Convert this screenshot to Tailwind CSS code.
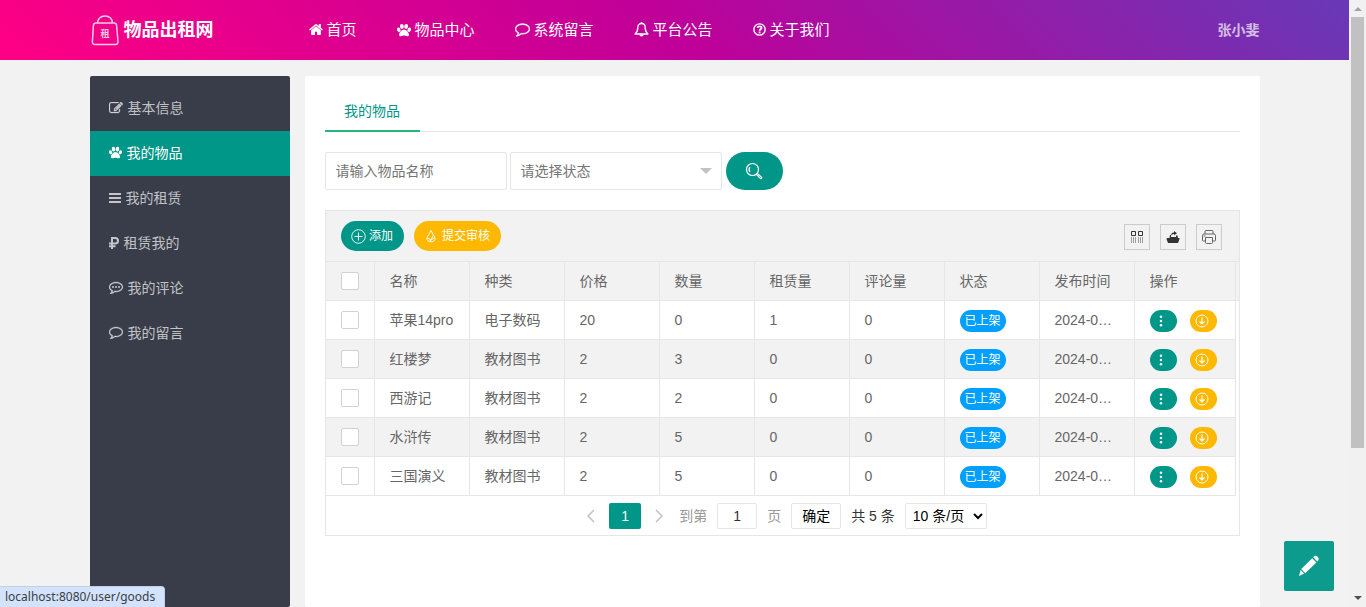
<!DOCTYPE html>
<html lang="zh">
<head>
  <meta charset="UTF-8" />
  <meta name="viewport" content="width=device-width, initial-scale=1.0"/>
  <title>物品出租网</title>
  <script src="https://cdn.jsdelivr.net/npm/@tailwindcss/browser@4"></script>
</head>
<body class="bg-[#f2f2f2] h-screen overflow-hidden flex text-sm text-[#666] font-['Liberation_Sans','Noto_Sans_CJK_SC',sans-serif]">

  <!-- Icons -->
  <svg class="hidden">
    <symbol id="i-home" viewBox="64 128 1664 1536"><path d="M1472 992v480q0 26-19 45t-45 19h-384v-384h-256v384h-384q-26 0-45-19t-19-45v-480q0-1 .5-3t.5-3l575-474 575 474q1 2 1 6zm223-69l-62 74q-8 9-21 11h-3q-13 0-21-7l-692-577-692 577q-12 8-24 7-13-2-21-11l-62-74q-8-10-7-23.500t11-21.500l719-599q32-26 76-26t76 26l244 204v-195q0-14 9-23t23-9h192q14 0 23 9t9 23v408l219 182q10 8 11 21.500t-7 23.500z"/></symbol>
    <symbol id="i-paw" viewBox="0 0 14 14"><ellipse cx="4.900" cy="3.400" rx="1.900" ry="2.500" transform="rotate(-10 4.900 3.400)"/><ellipse cx="9.100" cy="3.400" rx="1.900" ry="2.500" transform="rotate(10 9.100 3.400)"/><ellipse cx="1.700" cy="6.800" rx="1.700" ry="2.200" transform="rotate(-25 1.700 6.800)"/><ellipse cx="12.300" cy="6.800" rx="1.700" ry="2.200" transform="rotate(25 12.300 6.800)"/><path d="M7 6.500c2.200 0 5 3.200 5 5.300 0 1.200-.9 1.500-1.900 1.500-1.200 0-2-.7-3.100-.7s-1.900.7-3.100.7c-1 0-1.900-.3-1.900-1.500 0-2.100 2.800-5.300 5-5.300z"/></symbol>
    <symbol id="i-comment" viewBox="0 128 1792 1664"><path stroke="currentColor" stroke-width="40" d="M896 384q-204 0-381.500 69.500t-282 187.500-104.500 255q0 112 71.500 213.500t201.500 175.500l87 50-27 96q-24 91-70 172 152-63 275-171l43-38 57 6q69 8 130 8 204 0 381.500-69.500t282-187.500 104.500-255-104.500-255-282-187.500-381.500-69.500zm896 512q0 174-120 321.500t-326 233-450 85.500q-70 0-145-8-198 175-460 242-49 14-114 22h-5q-15 0-27-10.500t-16-27.500v-1q-3-4-.5-12t2-10 4.500-9.500l6-9 7-8.500 8-9q7-8 31-34.500t34.500-38 31-39.500 32.500-51 27-59 26-76q-157-89-247.500-220t-90.500-281q0-174 120-321.500t326-233 450-85.500 450 85.500 326 233 120 321.500z"/></symbol>
    <symbol id="i-commenting" viewBox="0 128 1792 1664"><use href="#i-comment" x="0" y="128" width="1792" height="1664"/><circle cx="512" cy="896" r="130"/><circle cx="896" cy="896" r="130"/><circle cx="1280" cy="896" r="130"/></symbol>
    <symbol id="i-bell" viewBox="0 0 15 15"><path d="M7.500 1.500c-2.300 0-3.700 1.600-3.700 4 0 3.200-.9 5-2.700 6.500h12.800c-1.800-1.500-2.700-3.300-2.700-6.500 0-2.400-1.400-4-3.700-4z" fill="none" stroke="currentColor" stroke-width="1.400" stroke-linejoin="round"/><path d="M6.700 0h1.600v1.800H6.700zM5.400 12.500h4.200a2.100 2.100 0 0 1-4.200 0z"/></symbol>
    <symbol id="i-question" viewBox="0 0 14 14"><circle cx="7" cy="7" r="6.100" fill="none" stroke="currentColor" stroke-width="1.500"/><path d="M4.800 5.300C5 4 5.800 3.600 7 3.600c1.300 0 2.200.7 2.200 1.700C9.200 6.700 7.100 6.800 7.100 8.400" fill="none" stroke="currentColor" stroke-width="1.900"/><path d="M6.100 9.200h2v1.900h-2z"/></symbol>
    <symbol id="i-edit" viewBox="0 128 1792 1536"><path stroke="currentColor" stroke-width="40" d="M888 1184l116-116-152-152-116 116v56h96v96h56zm440-720q-16-16-33 1l-350 350q-17 17-1 33t33-1l350-350q17-17 1-33zm80 594v190q0 119-84.500 203.500t-203.500 84.500h-832q-119 0-203.500-84.500t-84.500-203.500v-832q0-119 84.500-203.500t203.500-84.500h832q63 0 117 25 15 7 18 23 3 17-9 29l-49 49q-14 14-32 8-23-6-45-6h-832q-66 0-113 47t-47 113v832q0 66 47 113t113 47h832q66 0 113-47t47-113v-126q0-13 9-22l64-64q15-15 35-7t20 29zm-96-738l288 288-672 672h-288v-288zm444 132l-92 92-288-288 92-92q28-28 68-28t68 28l152 152q28 28 28 68t-28 68z"/></symbol>
    <symbol id="i-bars" viewBox="0 0 12 12"><path d="M0 1h12v2H0zM0 5h12v2H0zM0 9h12v2H0z"/></symbol>
    <symbol id="i-rub" viewBox="0 0 10 12"><path d="M3 12V1h3.200a2.800 2.800 0 0 1 0 5.600H0M0 9.200h6.500" fill="none" stroke="currentColor" stroke-width="2"/></symbol>
    <symbol id="i-down" viewBox="0 0 14 14"><g fill="none" stroke="currentColor"><circle cx="7" cy="7" r="6"/><path d="M7 3.500v6.500M4.500 7.500L7 10l2.500-2.500" stroke-width="1.200"/></g></symbol>
    <symbol id="i-more" viewBox="0 0 14 14"><circle cx="7" cy="2" r="1.500"/><circle cx="7" cy="7" r="1.500"/><circle cx="7" cy="12" r="1.500"/></symbol>
  </svg>

  <div class="flex-1 min-w-0 flex flex-col">
    <!-- Header -->
    <header class="h-[60px] shrink-0 bg-[linear-gradient(45deg,#ff0084,#bf0099_50%,#6739b7)] text-white">
      <div class="max-w-[1170px] h-full mx-auto flex items-center">
        <a href="#" class="w-[219px] flex items-center gap-1 text-lg font-bold">
          <svg class="w-[30px] h-8 opacity-80" viewBox="0 0 30 32" fill="none" stroke="currentColor" stroke-width="1.500">
            <path d="M7.500 9C8 4.500 10.500 2 15 2s7 2.500 7.500 7M6 9h18c1.800 0 2.500 1 2.600 2.500l1.400 16c.1 2-.8 3-2.600 3H5c-1.800 0-2.700-1-2.600-3l1-16C3.500 10 4.300 9 6 9z"/>
            <text x="15" y="23" text-anchor="middle" font-size="9" font-weight="700" fill="currentColor" stroke="none">租</text>
          </svg>
          物品出租网
        </a>
        <nav class="flex gap-10 text-[15px]">
          <a href="#" class="flex items-center gap-1"><svg class="w-3.5 h-[13px] fill-current"><use href="#i-home"/></svg>首页</a>
          <a href="#" class="flex items-center gap-1"><svg class="size-3.5 fill-current"><use href="#i-paw"/></svg>物品中心</a>
          <a href="#" class="flex items-center gap-1"><svg class="size-[15px] fill-current"><use href="#i-comment"/></svg>系统留言</a>
          <a href="#" class="flex items-center gap-1"><svg class="size-[15px] fill-current"><use href="#i-bell"/></svg>平台公告</a>
          <a href="#" class="flex items-center gap-1"><svg class="size-[13px] fill-current"><use href="#i-question"/></svg>关于我们</a>
        </nav>
        <a href="#" class="ml-auto font-bold text-white/70">张小斐</a>
      </div>
    </header>

    <div class="flex-1 w-full max-w-[1170px] mx-auto mt-4 flex gap-[15px]">
      <!-- Side menu -->
      <nav class="w-[200px] shrink-0 bg-[#393d49] rounded-xs py-[10px] text-white/70">
        <a href="#" class="h-[45px] px-[19px] pb-0.5 flex items-center gap-[5px]"><svg class="w-3.5 h-3 fill-current"><use href="#i-edit"/></svg>基本信息</a>
        <a href="#" class="h-[45px] px-[19px] pb-0.5 flex items-center gap-[5px] bg-[#009688] text-white"><svg class="size-[13px] fill-current"><use href="#i-paw"/></svg>我的物品</a>
        <a href="#" class="h-[45px] px-[19px] pb-0.5 flex items-center gap-[5px]"><svg class="size-3 fill-current"><use href="#i-bars"/></svg>我的租赁</a>
        <a href="#" class="h-[45px] px-[19px] pb-0.5 flex items-center gap-[5px]"><svg class="w-[10px] h-3 fill-current"><use href="#i-rub"/></svg>租赁我的</a>
        <a href="#" class="h-[45px] px-[19px] pb-0.5 flex items-center gap-[5px]"><svg class="w-3.5 h-[13px] fill-current"><use href="#i-commenting"/></svg>我的评论</a>
        <a href="#" class="h-[45px] px-[19px] pb-0.5 flex items-center gap-[5px]"><svg class="w-3.5 h-[13px] fill-current"><use href="#i-comment"/></svg>我的留言</a>
      </nav>

      <main class="flex-1 min-w-0 bg-white rounded-xs px-5 pt-[15px]">
        <!-- Tab -->
        <div class="h-[41px] border-b border-[#e6e6e6] flex">
          <a href="#" class="w-[95px] h-[41px] flex items-center justify-center border-b-2 border-[#22b67b] text-[#009688]">我的物品</a>
        </div>

        <!-- Search -->
        <form class="mt-5 flex">
          <input type="text" aria-label="物品名称" placeholder="请输入物品名称" class="w-[182px] h-[38px] mr-[3px] px-[10px] border border-[#e6e6e6] rounded-xs placeholder:text-[#757575] outline-none" />
          <div class="relative w-[212px] mr-1">
            <select aria-label="状态" class="appearance-none w-full h-[38px] px-[10px] border border-[#e6e6e6] rounded-xs bg-white text-[#757575]">
              <option>请选择状态</option>
            </select>
            <span class="absolute right-[10px] top-4 border-x-6 border-t-6 border-x-transparent border-t-[#c2c2c2] pointer-events-none"></span>
          </div>
          <button type="button" aria-label="搜索" class="w-[57px] h-[38px] rounded-full bg-[#009688] text-white flex items-center justify-center">
            <svg class="size-[18px]" viewBox="0 0 18 18" fill="none" stroke="currentColor" stroke-width="1.200"><circle cx="7.500" cy="7.500" r="6"/><path d="M5 5.200a3.500 3.500 0 0 0 0 4.600"/><path d="M11.500 12.500l1-1 4 3.600c.8.8-.4 2-1.200 1.200z"/></svg>
          </button>
        </form>

        <div class="mt-5 border border-[#e6e6e6]">
          <!-- Toolbar -->
          <div class="h-[51px] px-[15px] bg-[#f2f2f2] border-b border-[#e6e6e6] flex items-center text-xs">
            <button class="h-[30px] w-[63px] mr-[10px] rounded-full bg-[#009688] text-white flex items-center justify-center gap-[3px]">
              <svg class="size-[15px]" viewBox="0 0 15 15" fill="none" stroke="currentColor" stroke-width=".9"><circle cx="7.500" cy="7.500" r="6.800"/><path d="M7.500 3.500v8M3.500 7.500h8"/></svg>添加
            </button>
            <button class="h-[30px] w-[87px] rounded-full bg-[#ffb800] text-white flex items-center justify-center gap-1">
              <svg class="size-[14px]" viewBox="0 0 14 14" fill="none" stroke="currentColor" stroke-width=".9"><path d="M7 1.500L2.800 9.200c-.3 2 1.700 3.600 4.200 3.600s4.500-1.600 4.200-3.600zM3 9l4 1.700L9.500 6M5 12.500l5.800-4"/></svg>提交审核
            </button>
            <div class="ml-auto mr-0.5 mt-0.5 flex gap-[10px] text-[#333]">
              <button aria-label="筛选列" class="size-[26px] border border-[#ccc] flex items-center justify-center">
                <svg class="size-[14px]" viewBox="0 0 14 14" fill="none" stroke="currentColor"><path d="M1.500 1.500h4v4h-4zM8.500 1.500h4v4h-4z"/><path d="M1.500 7v6M5.500 7v6M8.500 7v6M12.500 7v6M3.500 7v6M10.500 7v6" stroke="#888" stroke-width=".8"/></svg>
              </button>
              <button aria-label="导出" class="size-[26px] border border-[#ccc] flex items-center justify-center">
                <svg class="size-[14px]" viewBox="0 0 14 14" fill="currentColor"><path d="M1 8h12.500v1L12 13H2L.5 9zM3.500 8l.5-3h1v2h5V5.500h1.500L12 8zM5 5.500C5 3.500 6 2.500 8 2.500V1l3 2.200L8 5.300V4C6.800 4 6 4.500 5 5.500z"/></svg>
              </button>
              <button aria-label="打印" class="size-[26px] border border-[#ccc] flex items-center justify-center">
                <svg class="size-[14px]" viewBox="0 0 14 14" fill="none" stroke="#666"><path d="M3 4V1.500Q3 .5 4 .5h6q1 0 1 1V4M3 11H1.500q-1 0-1-1V5.500q0-1.500 1.500-1.500h10q1.500 0 1.500 1.500V10q0 1-1 1H11M3.500 7.500h7v5q0 1-1 1h-5q-1 0-1-1zM1.500 6h2"/></svg>
              </button>
            </div>
          </div>

          <table class="w-full table-fixed border-separate border-spacing-0 text-left">
            <thead>
              <tr class="h-[39px] bg-[#f2f2f2] *:border-r *:border-b *:border-[#e6e6e6] *:font-normal *:pl-[15px]">
                <th class="w-[49px]"><input type="checkbox" aria-label="全选" class="block appearance-none size-[18px] bg-white border border-[#d2d2d2] rounded-xs" /></th>
                <th class="w-[95px]">名称</th>
                <th class="w-[95px]">种类</th>
                <th class="w-[95px]">价格</th>
                <th class="w-[95px]">数量</th>
                <th class="w-[95px]">租赁量</th>
                <th class="w-[95px]">评论量</th>
                <th class="w-[95px]">状态</th>
                <th class="w-[95px]">发布时间</th>
                <th class="w-[101px]">操作</th>
                <td class="border-r-0! px-0!"></td>
              </tr>
            </thead>
            <tbody id="goods"></tbody>
          </table>

          <!-- Pager -->
          <div class="h-[39px] pl-[10px] flex items-center justify-center text-[#999]">
            <button aria-label="上一页" class="mr-[14px]"><svg class="w-2 h-3.5" viewBox="0 0 8 14" fill="none" stroke="#c2c2c2" stroke-width="1.500"><path d="M7 1L1 7l6 6"/></svg></button>
            <button class="w-8 h-[26px] rounded-xs bg-[#009688] text-white">1</button>
            <button aria-label="下一页" class="ml-[14px] mr-4"><svg class="w-2 h-3.5" viewBox="0 0 8 14" fill="none" stroke="#c2c2c2" stroke-width="1.500"><path d="M1 1l6 6-6 6"/></svg></button>
            <label for="page">到第</label>
            <input id="page" type="text" value="1" class="w-10 h-[26px] mx-[10px] border border-[#e6e6e6] rounded-xs text-center text-[#333]" />
            页
            <button class="w-[50px] h-[26px] mx-[10px] border border-[#e6e6e6] rounded-xs text-black">确定</button>
            <span class="text-[#333]">共 5 条</span>
            <select aria-label="每页条数" class="w-[82px] h-[26px] ml-[10px] pl-[3px] border border-[#e6e6e6] rounded-xs bg-white text-black">
              <option>10 条/页</option>
            </select>
          </div>
        </div>
      </main>
    </div>
  </div>

  <!-- Scrollbar -->
  <div class="w-[17px] shrink-0 bg-[#f1f1f1] flex flex-col items-center">
    <span class="mt-[7px] mb-[6px] border-x-4 border-b-4 border-x-transparent border-b-[#a3a3a3]"></span>
    <div class="w-[13px] h-3/4 max-h-[431px] bg-[#c1c1c1]"></div>
    <span class="mt-auto mb-[7px] border-x-4 border-t-4 border-x-transparent border-t-[#505050]"></span>
  </div>

  <button aria-label="编辑" class="fixed right-8 bottom-4 size-[50px] rounded-xs bg-[#009688]/95 text-white flex items-center justify-center">
    <svg class="size-[22px] fill-current" viewBox="0 0 22 22"><path d="M15.200 2.200l1-1c2-1.600 5.800 1.800 4 4.200l-1 1zM14.200 3.200l4.200 4.200L7.200 18.200l-4-4.200zM2.600 14.900l3.600 3.700L1 21z"/></svg>
  </button>

  <div class="fixed left-0 bottom-0 w-[165px] h-[21px] pl-[5px] flex items-center rounded-tr bg-[#d3e3fd] border-t border-r border-[#c3cfe2] text-xs text-[#3c4043] font-['Noto_Sans','Open_Sans',sans-serif]">localhost:8080/user/goods</div>

  <script>
    const goods = [
      ['苹果14pro', '电子数码', 20, 0, 1, 0],
      ['红楼梦', '教材图书', 2, 3, 0, 0],
      ['西游记', '教材图书', 2, 2, 0, 0],
      ['水浒传', '教材图书', 2, 5, 0, 0],
      ['三国演义', '教材图书', 2, 5, 0, 0]
    ];

    document.getElementById('goods').innerHTML = goods.map(row => `
      <tr class="h-[39px] even:*:bg-[#f2f2f2] *:border-r *:border-b *:border-[#e6e6e6] *:pl-[15px]">
        <td><input type="checkbox" aria-label="${row[0]}" class="block appearance-none size-[18px] bg-white border border-[#d2d2d2] rounded-xs" /></td>
        ${row.map(value => `<td class="whitespace-nowrap">${value}</td>`).join('')}
        <td><span class="block w-[46px] h-[22px] leading-[22px] mt-px rounded-full bg-[#01a0ff] text-white text-xs text-center">已上架</span></td>
        <td class="whitespace-nowrap">2024-0…</td>
        <td>
          <div class="flex gap-[13px] mt-px text-white">
            <button aria-label="更多" class="w-[27px] h-[22px] rounded-full bg-[#009688] flex items-center justify-center"><svg class="size-3 fill-current mr-1"><use href="#i-more"/></svg></button>
            <button aria-label="下架" class="w-[27px] h-[22px] rounded-full bg-[#ffb800] flex items-center justify-center"><svg class="size-3.5 mr-0.5"><use href="#i-down"/></svg></button>
          </div>
        </td>
      </tr>`).join('');
  </script>
</body>
</html>
